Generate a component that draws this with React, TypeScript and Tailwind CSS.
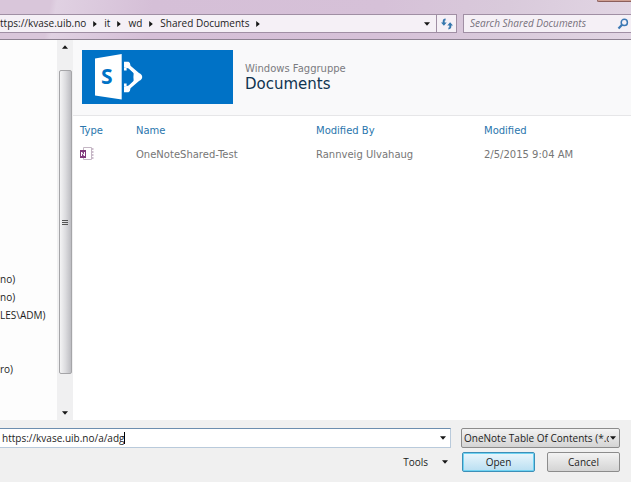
import { FC } from "react"
import clsx from "clsx"

const crumbs = ["ttps://kvase.uib.no", "it", "wd", "Shared Documents"]

const drives = [
  { name: "no)", className: "mt-[230px]" },
  { name: "no)", className: "" },
  { name: "LES\\ADM)", className: "" },
  { name: "ro)", className: "mt-9" },
]

const documents = [
  { name: "OneNoteShared-Test", author: "Rannveig Ulvahaug", modified: "2/5/2015 9:04 AM" },
]

const Arrow: FC<{ direction: "up" | "down" | "right"; className?: string }> = ({
  direction,
  className,
}) => (
  <svg
    viewBox="0 0 6 6"
    aria-hidden="true"
    className={clsx(
      "size-1.5 shrink-0 fill-[#161616]",
      direction === "up" && "rotate-180",
      direction === "right" && "-rotate-90",
      className
    )}
  >
    <path d="M0 1.2h6L3 4.8z" />
  </svg>
)

const RefreshIcon: FC = () => (
  <svg viewBox="0 0 12 12" aria-hidden="true" className="size-3 fill-[#3577ad]">
    <path d="M4.6 0.5v2h-.9v2.1h2L2.9 7.8 0 4.6h1.7V3.4Q1.7 0.8 4.6 0.5z" />
    <path d="M7.4 11.5v-2h.9V7.4h-2L9.1 4.2 12 7.4h-1.7v1.2q0 2.6-2.9 2.9z" />
  </svg>
)

const SearchIcon: FC = () => (
  <svg viewBox="0 0 12 12" aria-hidden="true" className="size-3 fill-none stroke-[#3c78b4]">
    <circle cx="7.3" cy="4.4" r="3.1" strokeWidth="1.5" />
    <path d="M5.1 6.8 1.5 10.6" strokeWidth="2.2" />
  </svg>
)

const SharePointLogo: FC = () => (
  <svg
    viewBox="0 0 151 54"
    role="img"
    aria-label="SharePoint"
    className="h-[54px] w-[151px] shrink-0 bg-[#0072c6]"
  >
    <path d="M13 8.5 39.7 4v45.5L13 45.5z" fill="#fff" />
    <text
      x="19"
      y="34"
      fill="#0072c6"
      fontFamily="Open Sans, sans-serif"
      fontSize="21"
      fontWeight="700"
    >
      S
    </text>
    <path
      d="M42 11.8h4.5q1.8.6 2 4L57 23q3.2 1.4 3.2 4T57 31l-8.5 7.2q-.2 3.4-2 4H42v-6q4-.2 4.6-.8l4.8-4.4v-8l-4.8-4.4q-.6-.6-4.6-.8z"
      fill="#fff"
    />
    <path d="M42 20.5h3l1.6-1.3 4.8 4.2q-.8 3.6 0 7.2l-4.8 4.2-1.6-1.3h-3" fill="#0072c6" />
    <path d="M42 18h2.6v2.4H42zM42 33.6h2.6V36H42z" fill="#fff" />
  </svg>
)

const OneNoteIcon: FC = () => (
  <svg viewBox="0 0 16 16" role="img" aria-label="OneNote" className="size-4">
    <path d="M3.5 1.5h8v12h-8z" fill="#fff" stroke="#c4b6c4" />
    <path d="M12 3h1.5M12 6h1.5M12 9h1.5M12 12h1.5" stroke="#9b7d9b" />
    <path d="M0 4h6v8H0z" fill="#80397b" />
    <path d="M1.5 10V6l3 4V6" fill="none" stroke="#fff" />
  </svg>
)

const AddressBar: FC = () => (
  <header className="relative flex h-10 shrink-0 items-end gap-1.5 border-b border-[#8d8191] bg-linear-[100deg,#d9c6da_0%,#d9c6da_8%,#e0d1e2_9%,#d5bfd7_24%,#d6c1d8_60%,#d9cadb_80%,#e2d6e4_100%] pb-1.5">
    <button
      type="button"
      aria-label="Close"
      className="absolute top-0 right-0 h-0.5 w-[34px] rounded-bl-sm border-b border-l border-[#8c5f5c] bg-[#cf9f92]"
    />
    <nav className="flex h-[19px] flex-1 items-center border border-l-0 border-[#a08fa4] bg-[#f5f0f6]">
      <ol className="flex flex-1 items-center">
        {crumbs.map((crumb) => (
          <li key={crumb} className="mr-1.5 flex items-center gap-1.5 whitespace-nowrap">
            <a href="#">{crumb}</a>
            <Arrow direction="right" />
          </li>
        ))}
      </ol>
      <button type="button" aria-label="Previous locations" className="px-1.5">
        <Arrow direction="down" />
      </button>
      <button
        type="button"
        aria-label="Refresh"
        className="flex h-full w-5 items-center justify-center border-l border-[#a08fa4]"
      >
        <RefreshIcon />
      </button>
    </nav>
    <form className="flex h-[19px] w-[168px] items-center border border-r-0 border-[#a08fa4] bg-[#f5f0f6] pr-0.5">
      <input
        type="search"
        aria-label="Search Shared Documents"
        placeholder="Search Shared Documents"
        className="min-w-0 flex-1 pl-1.5 italic outline-none placeholder:text-[#77717c]"
      />
      <button type="button" aria-label="Search">
        <SearchIcon />
      </button>
    </form>
  </header>
)

const FolderTree: FC = () => (
  <aside className="flex w-[73px] shrink-0 bg-[#fdfdfd]">
    <ul className="flex-1 leading-[18px] whitespace-nowrap">
      {drives.map((drive, index) => (
        <li key={index} className={drive.className}>
          {drive.name}
        </li>
      ))}
    </ul>
    <div className="flex w-4 flex-col items-center bg-[#f0f0f1] py-1">
      <Arrow direction="up" />
      <div className="mt-5 mb-9 flex w-[13px] flex-1 flex-col items-center justify-center gap-px rounded-xs border border-[#a5a5a8] bg-linear-to-r from-[#f4f4f5] via-[#dcdcdf] to-[#bdbdc2]">
        <span className="h-px w-1.5 bg-[#555]" />
        <span className="h-px w-1.5 bg-[#555]" />
        <span className="h-px w-1.5 bg-[#555]" />
      </div>
      <Arrow direction="down" />
    </div>
  </aside>
)

const DocumentLibrary: FC = () => (
  <main className="min-w-0 flex-1 bg-white font-['DejaVu_Sans',sans-serif] text-[10px]">
    <div className="flex items-center gap-3 border-b border-[#e6e6e8] bg-[#f9f9fa] pt-2.5 pb-[11px] pl-[9px]">
      <SharePointLogo />
      <div className="pt-0.5">
        <p className="leading-3 text-[#7b7b80]">Windows Faggruppe</p>
        <h1 className="text-[15px] leading-[18px] text-[#0f3450]">Documents</h1>
      </div>
    </div>
    <table className="w-full table-fixed text-left text-[#767676]">
      <thead className="text-[#2a76ad]">
        <tr className="h-7">
          <th className="w-[63px] pl-[7px] font-normal">Type</th>
          <th className="w-[180px] font-normal">Name</th>
          <th className="w-[168px] font-normal">Modified By</th>
          <th className="font-normal">Modified</th>
        </tr>
      </thead>
      <tbody>
        {documents.map((doc) => (
          <tr key={doc.name} className="h-5">
            <td className="pl-[7px]">
              <OneNoteIcon />
            </td>
            <td>{doc.name}</td>
            <td>{doc.author}</td>
            <td>{doc.modified}</td>
          </tr>
        ))}
      </tbody>
    </table>
  </main>
)

const DialogFooter: FC = () => (
  <footer className="flex shrink-0 flex-col gap-1 bg-[#f0f0f0] pt-2 pr-[11px] pb-2.5">
    <div className="flex gap-2.5">
      <div className="flex h-5 flex-1 items-center border border-l-0 border-[#b9cadb] border-t-[#6d8eaf] bg-white pr-1 pl-0.5">
        <input
          type="text"
          aria-label="File name"
          defaultValue="https://kvase.uib.no/a/adg"
          className="field-sizing-content outline-none"
        />
        <span className="h-3 w-px bg-black" />
        <button type="button" aria-label="Previous file names" className="ml-auto">
          <Arrow direction="down" />
        </button>
      </div>
      <div className="relative w-[159px]">
        <select
          aria-label="File type"
          className="h-5 w-full appearance-none overflow-hidden rounded-xs border border-[#8c8c8c] bg-linear-to-b from-[#f3f3f3] to-[#d4d4d4] pr-2.5 pl-0.5 whitespace-nowrap"
        >
          <option>OneNote Table Of Contents (*.o</option>
        </select>
        <Arrow direction="down" className="pointer-events-none absolute top-[7px] right-1" />
      </div>
    </div>
    <div className="flex items-center justify-end gap-3">
      <button type="button" className="mr-0.5 flex items-center gap-3.5">
        Tools
        <Arrow direction="down" />
      </button>
      <button
        type="button"
        className="h-5 w-[73px] rounded-xs border border-[#3c8fb8] bg-linear-to-b from-[#eaf6fc] to-[#b9dff2] inset-ring inset-ring-[#6fd3f2]"
      >
        Open
      </button>
      <button
        type="button"
        className="h-5 w-[73px] rounded-xs border border-[#8c8c8c] bg-linear-to-b from-[#f3f3f3] to-[#d4d4d4]"
      >
        Cancel
      </button>
    </div>
  </footer>
)

export default function App() {
  return (
    <div className="flex min-h-screen flex-col font-['Open_Sans',sans-serif] text-[10px] text-[#1c1c1c]">
      <AddressBar />
      <div className="flex flex-1">
        <FolderTree />
        <DocumentLibrary />
      </div>
      <DialogFooter />
    </div>
  )
}
